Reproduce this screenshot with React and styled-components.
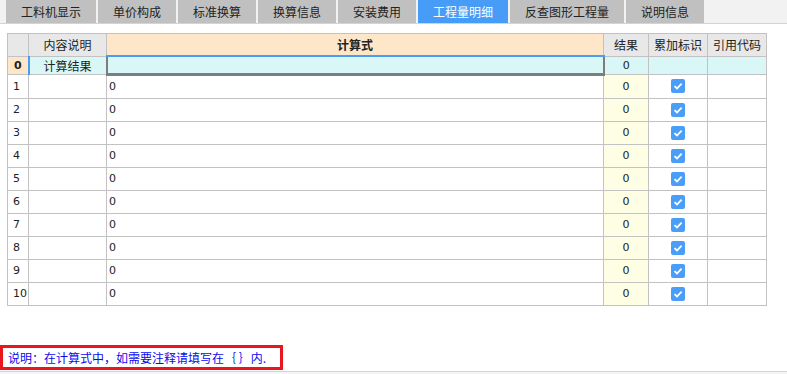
import React from "react";
import styled, { createGlobalStyle } from "styled-components";

const Global = createGlobalStyle`
  html, body { margin: 0; padding: 0; background: #fff; }
  body { font-family: "Noto Sans CJK SC", "Noto Sans", sans-serif; }
`;

const Page = styled.div`
  width: 787px;
  height: 374px;
  display: flex;
  flex-direction: column;
  overflow: hidden;
`;

const TabBar = styled.div`
  display: flex;
  gap: 2px;
  height: 23px;
  padding-left: 6px;
  background: #f2f2f2;
  border-bottom: 1px solid #d4d4d4;
`;

const Tab = styled.div`
  padding: 0 15px;
  height: 23px;
  line-height: 23px;
  font-size: 12px;
  color: ${(p) => (p.$active ? "#fff" : "#222")};
  background: ${(p) => (p.$active ? "#469cf7" : "#c0c0c0")};
  white-space: nowrap;
`;

const Grid = styled.table`
  margin: 9px 0 0 7px;
  border-collapse: collapse;
  table-layout: fixed;
  width: 760px;
  font-size: 12px;
  color: #222;
`;

const HeadCell = styled.th`
  height: 21px;
  padding: 0;
  border: 1px solid #c2c2c2;
  background: ${(p) => (p.$peach ? "#fee7c9" : "#e8e8e8")};
  font-weight: ${(p) => (p.$bold ? 700 : 400)};
  font-size: 12px;
  text-align: center;
  border-bottom: ${(p) => (p.$sel ? "2px solid #4a9cf5" : "1px solid #c2c2c2")};
`;

const Cell = styled.td`
  height: 22px;
  padding: 0;
  border: 1px solid #c2c2c2;
  background: ${(p) => p.$bg || "#fff"};
  text-align: ${(p) => p.$align || "left"};
  font-family: "DejaVu Sans", sans-serif;
  font-size: 11px;
  vertical-align: middle;
`;

const NumCell = styled(Cell)`
  padding-left: 5px;
`;

const TopRowCell = styled(Cell)`
  height: 17px;
  background: ${(p) => p.$bg || "#d9f7f7"};
  text-align: ${(p) => p.$align || "left"};
  font-family: ${(p) => (p.$cjk ? '"Noto Sans CJK SC", sans-serif' : '"DejaVu Sans", sans-serif')};
  font-size: ${(p) => (p.$cjk ? "12px" : "11px")};
  font-weight: ${(p) => (p.$bold ? 700 : 400)};
  border-right: ${(p) => (p.$marker ? "2px solid #4a9cf5" : "1px solid #c2c2c2")};
`;

const FocusCell = styled(Cell)`
  height: 15px;
  background: #d9f7f7;
  border: 2px solid #7d7d7d;
  border-top: none;
  border-bottom: 3px solid #7d7d7d;
`;

const FormulaText = styled.span`
  padding-left: 2px;
`;

const Check = styled.span`
  display: inline-flex;
  align-items: center;
  justify-content: center;
  width: 14px;
  height: 14px;
  border-radius: 2px;
  background: #4a9ef8;
  vertical-align: middle;
`;

const Note = styled.div`
  margin-top: 39px;
  width: 272px;
  height: 19px;
  margin-left: 0;
  border: 3px solid #e8161f;
  display: flex;
  align-items: center;
  padding-left: 5px;
  font-size: 12px;
  color: #0a0af0;
  white-space: nowrap;
  background: #fff;
`;

const Footer = styled.div`
  margin-top: 1px;
  flex: 1;
  border-top: 1px solid #d6d6d6;
  background: #f4f4f4;
`;

const tabs = ["工料机显示", "单价构成", "标准换算", "换算信息", "安装费用", "工程量明细", "反查图形工程量", "说明信息"];

const CheckIcon = () => (
  <Check>
    <svg width="10" height="10" viewBox="0 0 10 10">
      <path d="M1.5 5.2 L4 7.5 L8.6 2.6" stroke="#fff" strokeWidth="1.8" fill="none" />
    </svg>
  </Check>
);

export default function App() {
  const rows = Array.from({ length: 10 }, (_, i) => i + 1);
  return (
    <Page>
      <Global />
      <TabBar>
        {tabs.map((t) => (
          <Tab key={t} $active={t === "工程量明细"}>{t}</Tab>
        ))}
      </TabBar>
      <Grid>
        <colgroup>
          <col style={{ width: 21 }} />
          <col style={{ width: 78 }} />
          <col style={{ width: 497 }} />
          <col style={{ width: 45 }} />
          <col style={{ width: 59 }} />
          <col style={{ width: 59 }} />
        </colgroup>
        <thead>
          <tr>
            <HeadCell />
            <HeadCell>内容说明</HeadCell>
            <HeadCell $peach $bold $sel>计算式</HeadCell>
            <HeadCell>结果</HeadCell>
            <HeadCell>累加标识</HeadCell>
            <HeadCell>引用代码</HeadCell>
          </tr>
        </thead>
        <tbody>
          <tr>
            <TopRowCell $bg="#fee7c9" $align="center" $bold $marker>0</TopRowCell>
            <TopRowCell $cjk $align="center">计算结果</TopRowCell>
            <FocusCell />
            <TopRowCell $align="center">0</TopRowCell>
            <TopRowCell />
            <TopRowCell />
          </tr>
          {rows.map((r) => (
            <tr key={r}>
              <NumCell>{r}</NumCell>
              <Cell />
              <Cell><FormulaText>0</FormulaText></Cell>
              <Cell $bg="#fefee4" $align="center">0</Cell>
              <Cell $align="center"><CheckIcon /></Cell>
              <Cell />
            </tr>
          ))}
        </tbody>
      </Grid>
      <Note>说明：在计算式中，如需要注释请填写在｛ ｝内.</Note>
      <Footer />
    </Page>
  );
}
